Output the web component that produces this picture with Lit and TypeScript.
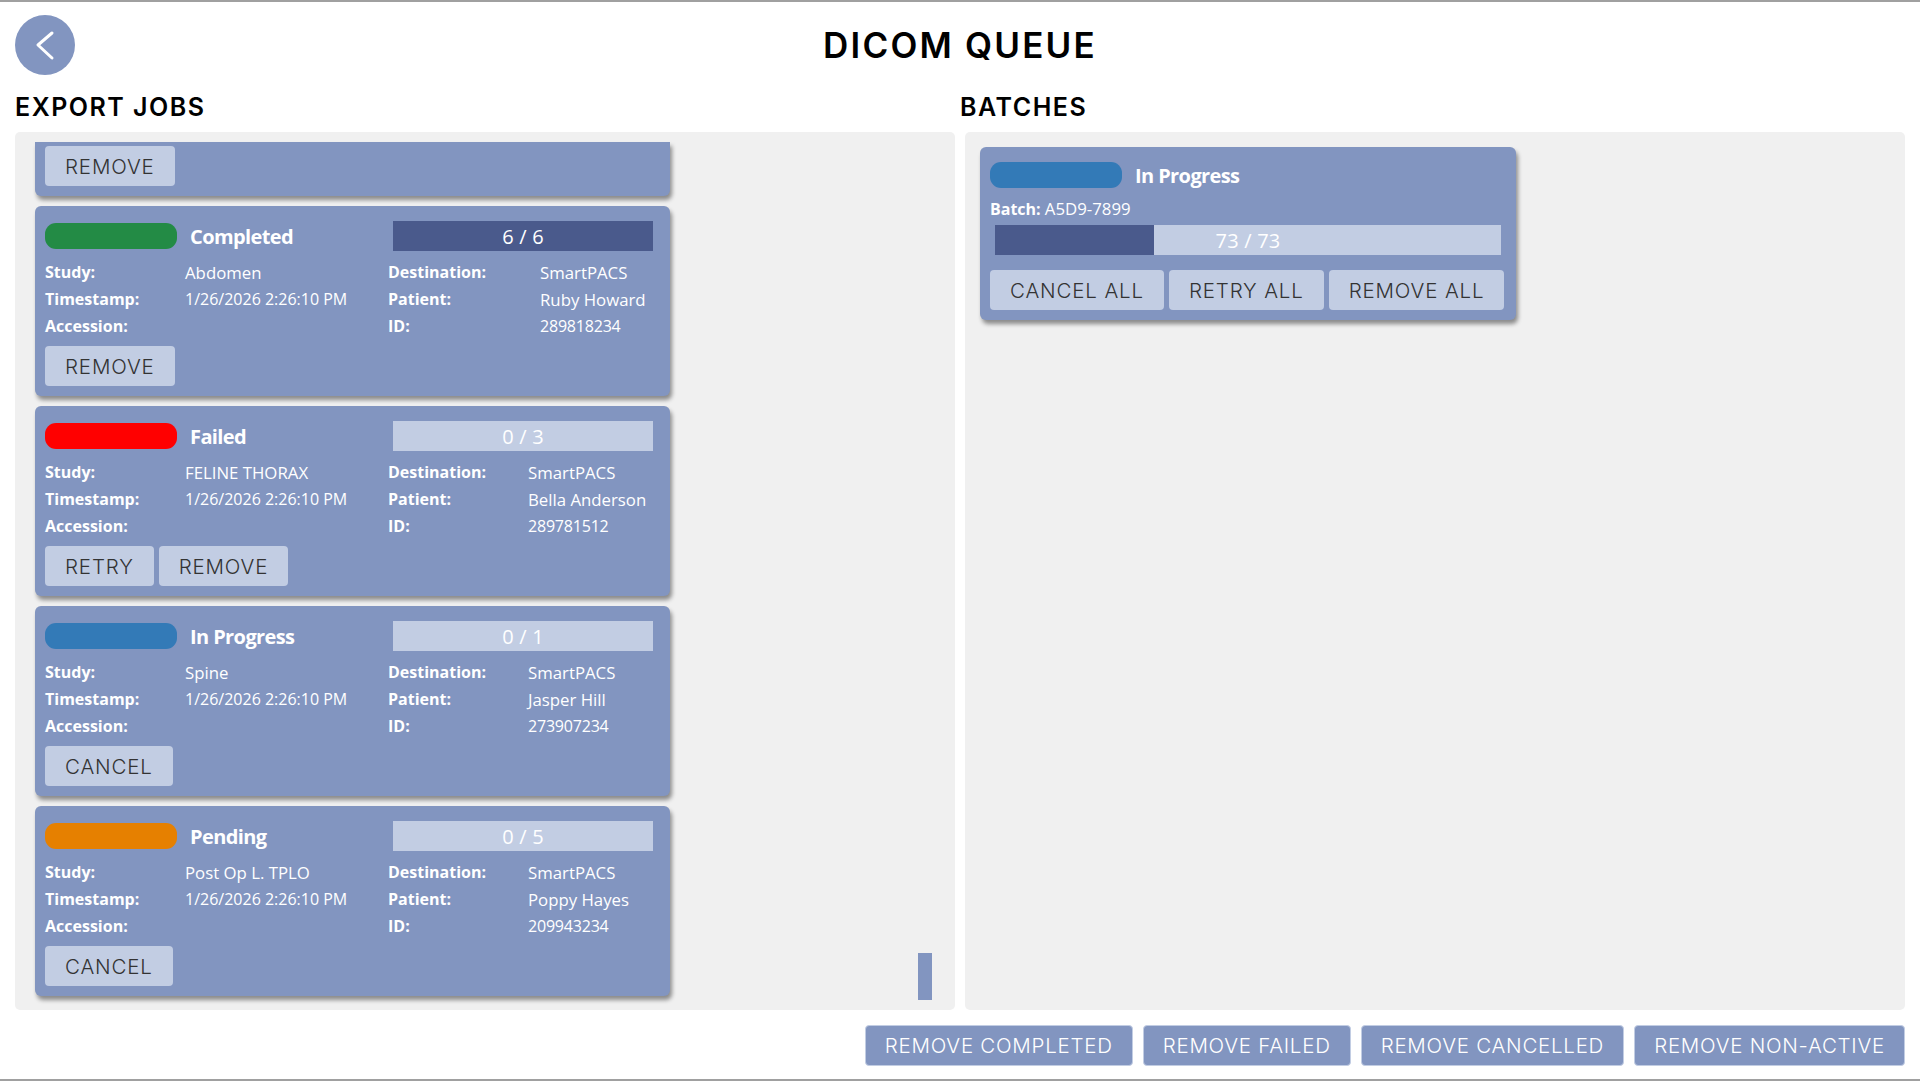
import { LitElement, html, css } from "lit";
import { customElement } from "lit/decorators.js";

interface Job {
  status: string;
  cls: string;
  done: number;
  total: number;
  study: string;
  patient: string;
  id: string;
  wide?: boolean;
  actions: string[];
}

const JOBS: Job[] = [
  { status: "Completed", cls: "green", done: 6, total: 6, study: "Abdomen", patient: "Ruby Howard", id: "289818234", wide: true, actions: ["REMOVE"] },
  { status: "Failed", cls: "red", done: 0, total: 3, study: "FELINE THORAX", patient: "Bella Anderson", id: "289781512", actions: ["RETRY", "REMOVE"] },
  { status: "In Progress", cls: "blue", done: 0, total: 1, study: "Spine", patient: "Jasper Hill", id: "273907234", actions: ["CANCEL"] },
  { status: "Pending", cls: "orange", done: 0, total: 5, study: "Post Op L. TPLO", patient: "Poppy Hayes", id: "209943234", actions: ["CANCEL"] },
];

@customElement("app-root")
export class AppRoot extends LitElement {
  static styles = css`
    :host {
      display: block;
      width: 1920px;
      height: 1081px;
      box-sizing: border-box;
      background: #fff;
      border-top: 2px solid #a0a0a0;
      border-bottom: 2px solid #a0a0a0;
      font-family: "Open Sans", "Noto Sans", sans-serif;
      color: #fff;
      overflow: hidden;
    }
    .page { display: flex; flex-direction: column; height: 100%; padding: 0 15px; box-sizing: border-box; }
    .top { display: grid; grid-template-columns: 1fr auto 1fr; align-items: center; height: 60px; margin-top: 13px; }
    .back {
      width: 60px; height: 60px; border-radius: 50%; background: #8295c0; border: 0; padding: 0;
      display: flex; align-items: center; justify-content: center;
    }
    .back svg { width: 60px; height: 60px; display: block; }
    h1 {
      margin: 0; color: #000; font-family: Inter, sans-serif; font-weight: 600; font-size: 35px;
      letter-spacing: 2.2px; line-height: 44px;
    }
    .cols { display: grid; grid-template-columns: 940px 940px; gap: 10px; margin-top: 16px; }
    .col { display: flex; flex-direction: column; }
    h2 {
      margin: 0; color: #000; font-family: Inter, sans-serif; font-weight: 600; font-size: 25px;
      letter-spacing: 1.5px; line-height: 32px; height: 41px;
    }
    .col.right h2 { margin-left: -5px; }
    .panel { position: relative; height: 878px; background: #f0f0f0; border-radius: 5px; overflow: hidden; box-sizing: border-box; }
    .list { display: flex; flex-direction: column; gap: 10px; padding: 10px 0 0 20px; }
    .card {
      width: 635px; box-sizing: border-box; height: 190px; padding: 15px 10px 0; background: #8295c0;
      border-radius: 6px; box-shadow: 2px 4px 4px rgba(0, 0, 0, 0.42);
    }
    .card.clipped { height: 54px; padding-top: 4px; border-radius: 0 0 6px 6px; }
    .head { display: flex; align-items: center; height: 30px; }
    .pill { width: 132px; height: 26px; border-radius: 11px; flex: none; }
    .green { background: #238b45; }
    .red { background: #ff0000; }
    .blue { background: #337ab7; }
    .orange { background: #e68000; }
    .status {
      font-size: 20px; font-weight: 700; margin-left: 13px; padding-top: 2px; line-height: 30px; letter-spacing: -0.6px;
    }
    .job-head .status { flex: 1; }
    .bar {
      position: relative; height: 30px; background: #c2cde3; overflow: hidden; font-size: 20px; line-height: 32px;
      text-align: center; letter-spacing: 0.2px;
    }
    .job-head .bar { width: 260px; margin-right: 7px; }
    .bar.full { background: #4a5a8c; }
    .fill { position: absolute; inset: 0 auto 0 0; background: #4a5a8c; }
    .bar span { position: relative; }
    .grid {
      display: grid; grid-template-columns: 140px 203px 140px 1fr; grid-auto-rows: 27px; margin-top: 8px;
      font-size: 16px; line-height: 27px;
    }
    .grid.wide { grid-template-columns: 140px 203px 152px 1fr; }
    .grid b, .batch b { font-weight: 700; }
    .word { font-size: 16.8px; }
    .num { letter-spacing: -0.2px; }
    .btns { display: flex; gap: 5px; margin-top: 6px; }
    .clipped .btns { margin-top: 0; }
    button.act {
      height: 40px; padding: 0 20px; background: #c2cde3; color: #333; border: 0; border-radius: 4px;
      font-family: Inter, sans-serif; font-weight: 300; font-size: 20.5px; letter-spacing: 0.85px; white-space: nowrap;
    }
    .thumb { position: absolute; right: 23px; bottom: 10px; width: 14px; height: 47px; background: #8295c0; }
    .batches { padding: 15px; }
    .batch-card {
      width: 536px; height: 173px; box-sizing: border-box; padding: 15px 10px 0; background: #8295c0;
      border-radius: 6px; box-shadow: 2px 4px 4px rgba(0, 0, 0, 0.42);
    }
    .batch-head { display: flex; align-items: center; height: 26px; }
    .batch { font-size: 16px; line-height: 24px; margin-top: 9px; }
    .batch-bar { margin: 4px 5px 0 5px; }
    .batch-card .btns { margin-top: 15px; }
    .foot { display: flex; justify-content: flex-end; gap: 10px; margin-top: 15px; }
    button.foot-btn {
      height: 41px; padding: 0 19px; background: #8295c0; color: #fff; border: 1px solid #c2cde3; border-radius: 4px;
      font-family: Inter, sans-serif; font-weight: 300; font-size: 20.5px; letter-spacing: 0.75px; white-space: nowrap;
    }
  `;

  private actions(list: string[]) {
    return html`<div class="btns">${list.map((a) => html`<button class="act">${a}</button>`)}</div>`;
  }

  private job(j: Job) {
    return html`<div class="card">
      <div class="head job-head">
        <div class="pill ${j.cls}"></div>
        <div class="status">${j.status}</div>
        <div class="bar ${j.done === j.total ? "full" : ""}"><span>${j.done} / ${j.total}</span></div>
      </div>
      <div class="grid ${j.wide ? "wide" : ""}">
        <b>Study:</b><span class="word">${j.study}</span><b>Destination:</b><span class="word">SmartPACS</span>
        <b>Timestamp:</b><span>1/26/2026 2:26:10 PM</span><b>Patient:</b><span class="word">${j.patient}</span>
        <b>Accession:</b><span></span><b>ID:</b><span class="num">${j.id}</span>
      </div>
      ${this.actions(j.actions)}
    </div>`;
  }

  render() {
    return html`<div class="page">
      <div class="top">
        <div>
          <button class="back" aria-label="Back">
            <svg viewBox="0 0 60 60" fill="none"><path d="M37 18 L23 30 L37 43" stroke="#fff" stroke-width="3" stroke-linecap="round" stroke-linejoin="round"/></svg>
          </button>
        </div>
        <h1>DICOM QUEUE</h1>
        <div></div>
      </div>
      <div class="cols">
        <div class="col">
          <h2>EXPORT JOBS</h2>
          <div class="panel">
            <div class="list">
              <div class="card clipped">${this.actions(["REMOVE"])}</div>
              ${JOBS.map((j) => this.job(j))}
            </div>
            <div class="thumb"></div>
          </div>
        </div>
        <div class="col right">
          <h2>BATCHES</h2>
          <div class="panel batches">
            <div class="batch-card">
              <div class="batch-head"><div class="pill blue"></div><div class="status">In Progress</div></div>
              <div class="batch"><b>Batch:</b> <span class="word">A5D9-7899</span></div>
              <div class="bar batch-bar"><div class="fill" style="width:${(159 / 506) * 100}%"></div><span>73 / 73</span></div>
              ${this.actions(["CANCEL ALL", "RETRY ALL", "REMOVE ALL"])}
            </div>
          </div>
        </div>
      </div>
      <div class="foot">
        ${["REMOVE COMPLETED", "REMOVE FAILED", "REMOVE CANCELLED", "REMOVE NON-ACTIVE"].map(
          (t) => html`<button class="foot-btn">${t}</button>`
        )}
      </div>
    </div>`;
  }
}
